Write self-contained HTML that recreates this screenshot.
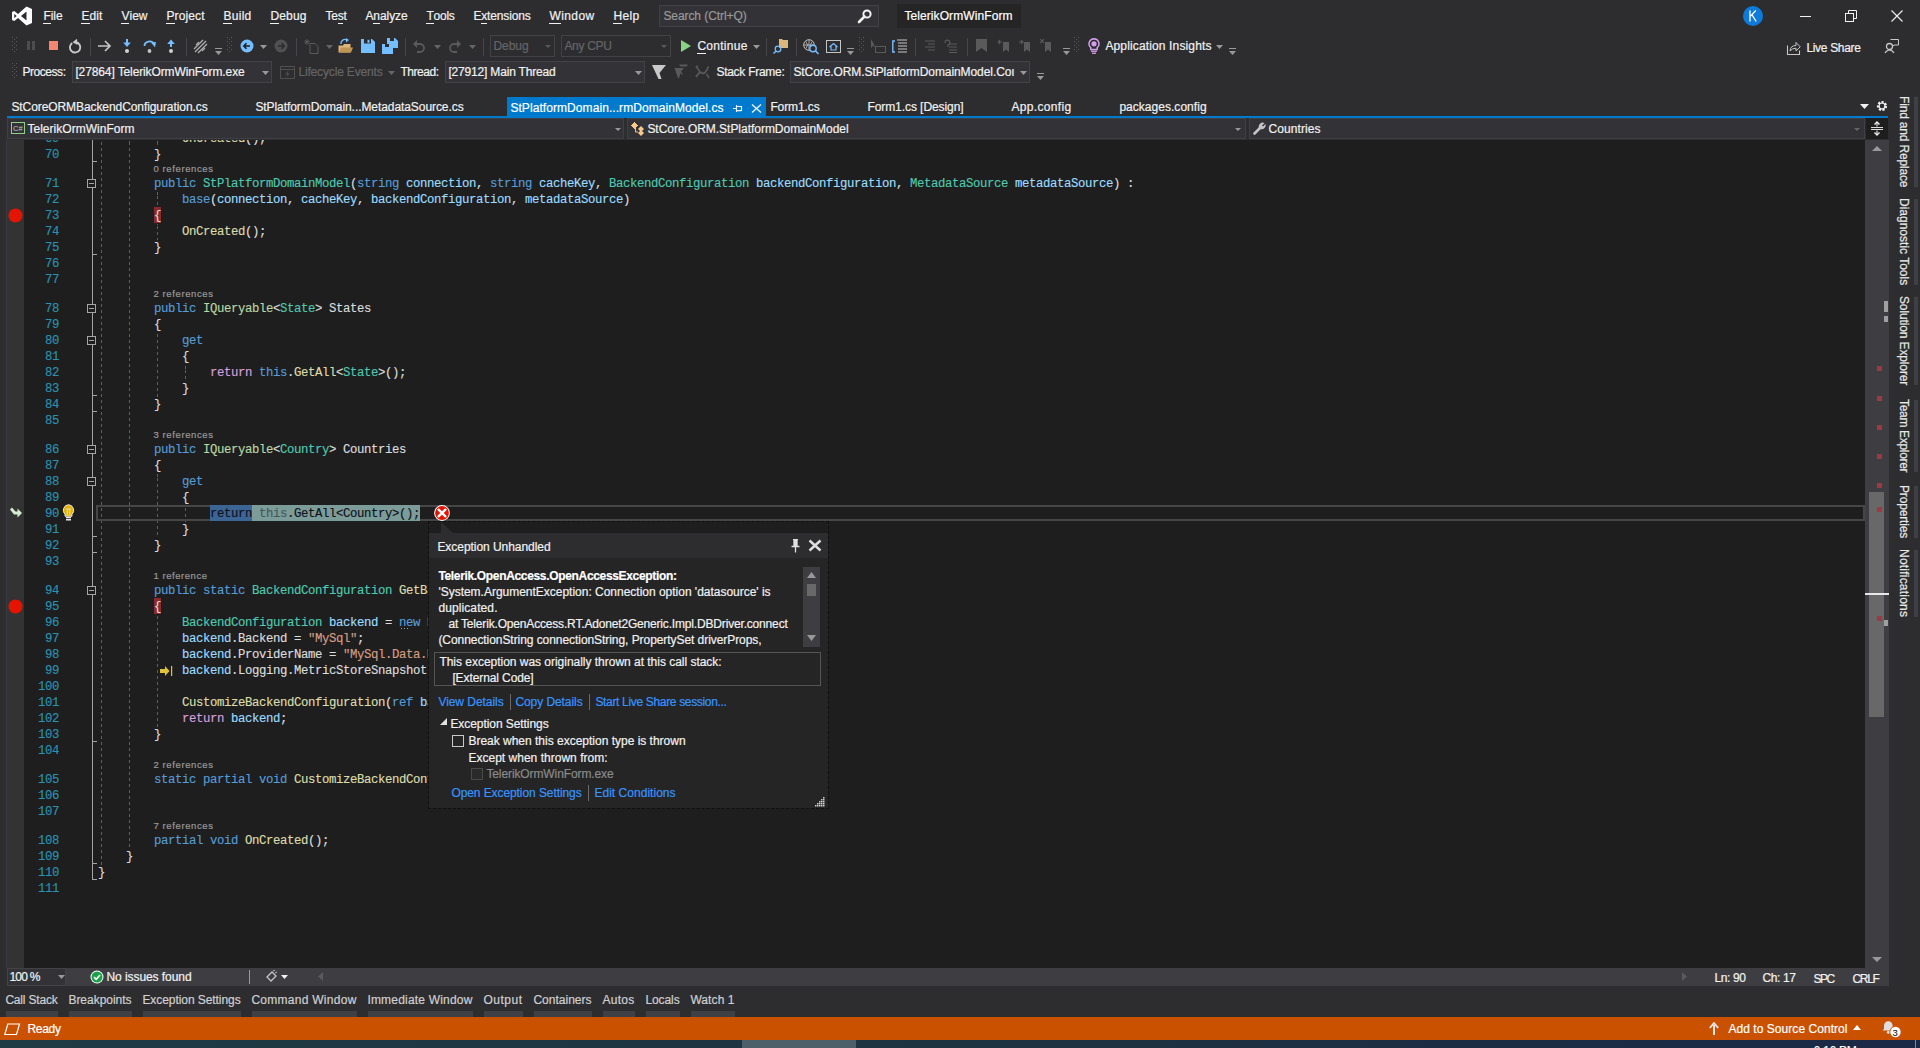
<!DOCTYPE html><html><head><meta charset="utf-8"><title>VS</title><style>
*{margin:0;padding:0;box-sizing:border-box}
html,body{width:1920px;height:1048px;overflow:hidden;background:#2d2d30}
body{position:relative;font-family:"Liberation Sans",sans-serif;font-size:12px;color:#f1f1f1}
.a{position:absolute}
.t{-webkit-text-stroke:0.2px currentColor;white-space:pre;line-height:16px;height:16px}
u{text-decoration:none;border-bottom:1px solid currentColor;display:inline-block;line-height:13px}
.code{-webkit-text-stroke:0.15px currentColor;position:absolute;left:98px;font-family:"Liberation Mono",monospace;font-size:12.3px;letter-spacing:-0.38px;line-height:16px;height:16px;white-space:pre;color:#dcdcdc}
.k{color:#569cd6}.c{color:#d8a0df}.y{color:#4ec9b0}.i{color:#b8d7a3}.p{color:#9cdcfe}.m{color:#dcdcaa}.s{color:#d69d85}
.ln{-webkit-text-stroke:0.15px currentColor;position:absolute;width:59px;left:0;text-align:right;font-family:"Liberation Mono",monospace;font-size:12.3px;letter-spacing:-0.38px;line-height:16px;height:16px;color:#2b91af}
.cl{-webkit-text-stroke:0.15px currentColor;position:absolute;left:153px;font-size:9.5px;line-height:13px;height:13px;color:#999999;white-space:pre}
</style></head><body><svg class="a" style="left:12px;top:6px;" width="20" height="20" viewBox="0 0 20 20"><path d="M14.5 0.5L20 3V17L14.5 19.5L6 12L2.3 15L0 13.9V6.1L2.3 5L6 8ZM14.5 5.5L9 10L14.5 14.5ZM2.3 7.7V12.3L4.6 10Z" fill="#ffffff" fill-rule="evenodd"/></svg>
<div class="a t" style="letter-spacing:-0.040px;left:43.40px;top:7.84px;font-size:12px;color:#f1f1f1;"><u>F</u>ile</div>
<div class="a t" style="letter-spacing:0.124px;left:81.40px;top:7.84px;font-size:12px;color:#f1f1f1;"><u>E</u>dit</div>
<div class="a t" style="letter-spacing:0.042px;left:121.40px;top:7.84px;font-size:12px;color:#f1f1f1;"><u>V</u>iew</div>
<div class="a t" style="letter-spacing:0.120px;left:166.40px;top:7.84px;font-size:12px;color:#f1f1f1;"><u>P</u>roject</div>
<div class="a t" style="letter-spacing:0.299px;left:223.40px;top:7.84px;font-size:12px;color:#f1f1f1;"><u>B</u>uild</div>
<div class="a t" style="letter-spacing:0.165px;left:270.40px;top:7.84px;font-size:12px;color:#f1f1f1;"><u>D</u>ebug</div>
<div class="a t" style="letter-spacing:-0.208px;left:325.40px;top:7.84px;font-size:12px;color:#f1f1f1;">Te<u>s</u>t</div>
<div class="a t" style="letter-spacing:-0.074px;left:365.40px;top:7.84px;font-size:12px;color:#f1f1f1;">A<u>n</u>alyze</div>
<div class="a t" style="letter-spacing:-0.232px;left:426.40px;top:7.84px;font-size:12px;color:#f1f1f1;"><u>T</u>ools</div>
<div class="a t" style="letter-spacing:-0.152px;left:473.40px;top:7.84px;font-size:12px;color:#f1f1f1;">E<u>x</u>tensions</div>
<div class="a t" style="letter-spacing:0.419px;left:549.40px;top:7.84px;font-size:12px;color:#f1f1f1;"><u>W</u>indow</div>
<div class="a t" style="letter-spacing:0.378px;left:613.40px;top:7.84px;font-size:12px;color:#f1f1f1;"><u>H</u>elp</div>
<div class="a" style="left:659px;top:5px;width:220px;height:22px;background:#333337;box-shadow:inset 0 0 0 1px #434346;"></div>
<div class="a t" style="letter-spacing:-0.077px;left:663.40px;top:7.84px;font-size:12px;color:#999999;">Search (Ctrl+Q)</div>
<svg class="a" style="left:857px;top:9px;" width="15" height="15" viewBox="0 0 15 15"><circle cx="10" cy="5" r="3.6" fill="none" stroke="#f1f1f1" stroke-width="2"/><path d="M7.5 7.5L2 13" stroke="#f1f1f1" stroke-width="2.6" stroke-linecap="round"/></svg>
<div class="a" style="left:897px;top:4px;width:124px;height:24px;background:#252526;"></div>
<div class="a t" style="letter-spacing:0.090px;left:904.40px;top:7.84px;font-size:12px;color:#ffffff;">TelerikOrmWinForm</div>
<svg class="a" style="left:1743px;top:6px;" width="20" height="20" viewBox="0 0 20 20"><circle cx="10" cy="10" r="10" fill="#0e7ad9"/><path d="M7 4.5V15.5M7 10.6L12.8 4.5M9 8.8L13.2 15.5" stroke="#fff" stroke-width="1.3" fill="none"/></svg>
<div class="a" style="left:1800px;top:16px;width:11px;height:1px;background:#f1f1f1;"></div>
<svg class="a" style="left:1845px;top:10px;" width="12" height="12" viewBox="0 0 12 12"><rect x="0.5" y="3.5" width="8" height="8" fill="none" stroke="#f1f1f1"/><path d="M3.5 3.5V0.5H11.5V8.5H8.5" fill="none" stroke="#f1f1f1"/></svg>
<svg class="a" style="left:1891px;top:10px;" width="12" height="12" viewBox="0 0 12 12"><path d="M0.5 0.5L11.5 11.5M11.5 0.5L0.5 11.5" stroke="#f1f1f1" stroke-width="1.1"/></svg>
<svg class="a" style="left:12px;top:37px;" width="5" height="16" viewBox="0 0 5 16"><rect x="0" y="0" width="1" height="1" fill="#5a5a5a"/><rect x="2" y="2" width="1" height="1" fill="#5a5a5a"/><rect x="4" y="0" width="1" height="1" fill="#5a5a5a"/><rect x="0" y="4" width="1" height="1" fill="#5a5a5a"/><rect x="2" y="6" width="1" height="1" fill="#5a5a5a"/><rect x="4" y="4" width="1" height="1" fill="#5a5a5a"/><rect x="0" y="8" width="1" height="1" fill="#5a5a5a"/><rect x="2" y="10" width="1" height="1" fill="#5a5a5a"/><rect x="4" y="8" width="1" height="1" fill="#5a5a5a"/><rect x="0" y="12" width="1" height="1" fill="#5a5a5a"/><rect x="2" y="14" width="1" height="1" fill="#5a5a5a"/><rect x="4" y="12" width="1" height="1" fill="#5a5a5a"/></svg>
<svg class="a" style="left:27px;top:41px;" width="9" height="9" viewBox="0 0 9 9"><rect x="0" y="0" width="3" height="9" fill="#4d4d4d"/><rect x="5" y="0" width="3" height="9" fill="#4d4d4d"/></svg>
<div class="a" style="left:49px;top:41px;width:9px;height:9px;background:#f48771;"></div>
<svg class="a" style="left:68px;top:38px;" width="14" height="16" viewBox="0 0 14 16"><path d="M4.2 5A5.2 5.2 0 1 0 8 4.2" fill="none" stroke="#c8c8c8" stroke-width="1.9"/><path d="M9 0.8L4.5 4.2L9.5 7Z" fill="#c8c8c8"/></svg>
<div class="a" style="left:90px;top:38px;width:1px;height:18px;background:#46464a;"></div>
<svg class="a" style="left:97px;top:39px;" width="15" height="14" viewBox="0 0 15 14"><path d="M1 7H13M8 2L13 7L8 12" fill="none" stroke="#c5c5c5" stroke-width="1.7"/></svg>
<svg class="a" style="left:122px;top:39px;" width="10" height="15" viewBox="0 0 10 15"><path d="M5 0V5" stroke="#75beff" stroke-width="2"/><path d="M1.2 3.5L5 8L8.8 3.5Z" fill="#75beff"/><circle cx="5" cy="12" r="2" fill="#d0d0d0"/></svg>
<svg class="a" style="left:143px;top:39px;" width="14" height="15" viewBox="0 0 14 15"><path d="M1.5 7A5 4.5 0 0 1 11 5" fill="none" stroke="#75beff" stroke-width="1.8"/><path d="M8 3.5L13 3L12 8.5Z" fill="#75beff"/><circle cx="6.5" cy="12" r="1.9" fill="#c5c5c5"/></svg>
<svg class="a" style="left:166px;top:39px;" width="10" height="15" viewBox="0 0 10 15"><path d="M5 3V8" stroke="#75beff" stroke-width="2"/><path d="M1.2 5L5 0.5L8.8 5Z" fill="#75beff"/><circle cx="5" cy="12" r="2" fill="#d0d0d0"/></svg>
<div class="a" style="left:186px;top:38px;width:1px;height:18px;background:#46464a;"></div>
<svg class="a" style="left:193px;top:39px;" width="15" height="15" viewBox="0 0 15 15"><path d="M2 13L13 2M5 14L14 5M1 10L10 1" stroke="#b0b0b0" stroke-width="1.3" fill="none"/><path d="M3 6L6 3M9 12L12 9" stroke="#b0b0b0" stroke-width="1.2"/></svg>
<svg class="a" style="left:215px;top:48px;" width="8" height="8" viewBox="0 0 8 8"><rect x="0" y="0" width="7" height="1" fill="#999"/><path d="M0 3H7L3.5 7Z" fill="#999"/></svg>
<svg class="a" style="left:227px;top:37px;" width="5" height="16" viewBox="0 0 5 16"><rect x="0" y="0" width="1" height="1" fill="#5a5a5a"/><rect x="2" y="2" width="1" height="1" fill="#5a5a5a"/><rect x="4" y="0" width="1" height="1" fill="#5a5a5a"/><rect x="0" y="4" width="1" height="1" fill="#5a5a5a"/><rect x="2" y="6" width="1" height="1" fill="#5a5a5a"/><rect x="4" y="4" width="1" height="1" fill="#5a5a5a"/><rect x="0" y="8" width="1" height="1" fill="#5a5a5a"/><rect x="2" y="10" width="1" height="1" fill="#5a5a5a"/><rect x="4" y="8" width="1" height="1" fill="#5a5a5a"/><rect x="0" y="12" width="1" height="1" fill="#5a5a5a"/><rect x="2" y="14" width="1" height="1" fill="#5a5a5a"/><rect x="4" y="12" width="1" height="1" fill="#5a5a5a"/></svg>
<svg class="a" style="left:240px;top:39px;" width="14" height="14" viewBox="0 0 14 14"><circle cx="7" cy="7" r="6.5" fill="#75beff"/><path d="M10 7H4M6.5 4.2L3.8 7L6.5 9.8" stroke="#1e1e1e" stroke-width="1.6" fill="none"/></svg>
<svg class="a" style="left:260px;top:45px;" width="7" height="4" viewBox="0 0 7 4"><path d="M0 0H7L3.5 4Z" fill="#999999"/></svg>
<svg class="a" style="left:274px;top:39px;" width="14" height="14" viewBox="0 0 14 14"><circle cx="7" cy="7" r="6.5" fill="#505050"/><path d="M4 7H10M7.5 4.2L10.2 7L7.5 9.8" stroke="#2d2d30" stroke-width="1.6" fill="none"/></svg>
<div class="a" style="left:296px;top:38px;width:1px;height:18px;background:#46464a;"></div>
<svg class="a" style="left:304px;top:39px;" width="15" height="15" viewBox="0 0 15 15"><path d="M6 4.5H11L14 7.5V14.5H6Z" fill="none" stroke="#5a5a5a" stroke-width="1"/><path d="M3 0V6M0 3H6M1 1L5 5M5 1L1 5" stroke="#5a5a5a" stroke-width="0.9"/></svg>
<svg class="a" style="left:326px;top:45px;" width="7" height="4" viewBox="0 0 7 4"><path d="M0 0H7L3.5 4Z" fill="#656565"/></svg>
<svg class="a" style="left:338px;top:38px;" width="15" height="16" viewBox="0 0 15 16"><path d="M0.5 7.5H5L6 6H12.5V14.5H0.5Z" fill="#dcb67a"/><path d="M1 14.5L3 9.5H15L13 14.5Z" fill="#c09553"/><path d="M3 6A4 4 0 0 1 9 2" fill="none" stroke="#75beff" stroke-width="1.4"/><path d="M8 0L11 2L8 4.5Z" fill="#75beff"/></svg>
<svg class="a" style="left:361px;top:39px;" width="14" height="14" viewBox="0 0 14 14"><path d="M0 0H11L14 3V14H0Z" fill="#75beff"/><rect x="3" y="0" width="7" height="4.5" fill="#2d2d30"/><rect x="6.5" y="0.8" width="2" height="3" fill="#75beff"/></svg>
<svg class="a" style="left:382px;top:38px;" width="16" height="16" viewBox="0 0 16 16"><path d="M5 0H13L16 3V10H5Z" fill="#75beff"/><rect x="8" y="0" width="4" height="3" fill="#2d2d30"/><path d="M0 6H8L11 9V16H0Z" fill="#75beff"/><rect x="3" y="6" width="4" height="3" fill="#2d2d30"/></svg>
<div class="a" style="left:405px;top:38px;width:1px;height:18px;background:#46464a;"></div>
<svg class="a" style="left:413px;top:39px;" width="12" height="14" viewBox="0 0 12 14"><path d="M2 5H7A4 4 0 0 1 7 13H4" fill="none" stroke="#5a5a5a" stroke-width="1.8"/><path d="M0 5L4 1V9Z" fill="#5a5a5a"/></svg>
<svg class="a" style="left:434px;top:45px;" width="7" height="4" viewBox="0 0 7 4"><path d="M0 0H7L3.5 4Z" fill="#656565"/></svg>
<svg class="a" style="left:449px;top:39px;" width="12" height="14" viewBox="0 0 12 14"><path d="M10 5H5A4 4 0 0 0 5 13H8" fill="none" stroke="#5a5a5a" stroke-width="1.8"/><path d="M12 5L8 1V9Z" fill="#5a5a5a"/></svg>
<svg class="a" style="left:469px;top:45px;" width="7" height="4" viewBox="0 0 7 4"><path d="M0 0H7L3.5 4Z" fill="#656565"/></svg>
<div class="a" style="left:483px;top:38px;width:1px;height:18px;background:#46464a;"></div>
<div class="a" style="left:490px;top:35px;width:65px;height:22px;box-shadow:inset 0 0 0 1px #434346;"></div>
<svg class="a" style="left:545px;top:45px;" width="6" height="3" viewBox="0 0 6 3"><path d="M0 0H6L3.0 3Z" fill="#5a5a5a"/></svg>
<div class="a t" style="letter-spacing:-0.035px;left:493.40px;top:37.84px;font-size:12px;color:#656565;">Debug</div>
<div class="a" style="left:561px;top:35px;width:110px;height:22px;box-shadow:inset 0 0 0 1px #434346;"></div>
<svg class="a" style="left:661px;top:45px;" width="6" height="3" viewBox="0 0 6 3"><path d="M0 0H6L3.0 3Z" fill="#5a5a5a"/></svg>
<div class="a t" style="letter-spacing:-0.308px;left:564.40px;top:37.84px;font-size:12px;color:#656565;">Any CPU</div>
<svg class="a" style="left:681px;top:40px;" width="10" height="12" viewBox="0 0 10 12"><path d="M0 0L10 6L0 12Z" fill="#89d185"/></svg>
<div class="a t" style="letter-spacing:0.269px;left:697.40px;top:37.84px;font-size:12px;color:#f1f1f1;"><u>C</u>ontinue</div>
<svg class="a" style="left:753px;top:45px;" width="7" height="4" viewBox="0 0 7 4"><path d="M0 0H7L3.5 4Z" fill="#999999"/></svg>
<div class="a" style="left:766px;top:38px;width:1px;height:18px;background:#46464a;"></div>
<svg class="a" style="left:773px;top:38px;" width="16" height="16" viewBox="0 0 16 16"><path d="M6 1H9L10 2H15V10H6Z" fill="#dcb67a"/><circle cx="5" cy="11" r="2.8" fill="none" stroke="#75beff" stroke-width="1.3"/><path d="M3 13L0.5 15.5" stroke="#75beff" stroke-width="1.5"/></svg>
<div class="a" style="left:796px;top:38px;width:1px;height:18px;background:#46464a;"></div>
<svg class="a" style="left:803px;top:39px;" width="17" height="16" viewBox="0 0 17 16"><circle cx="6" cy="6" r="5.3" fill="none" stroke="#c5c5c5" stroke-width="1"/><path d="M1 6H11M6 1V11M3 2.5Q6 6 3 9.5M9 2.5Q6 6 9 9.5" fill="none" stroke="#c5c5c5" stroke-width="0.8"/><circle cx="10" cy="9.5" r="3.2" fill="#2d2d30" stroke="#75beff" stroke-width="1.4"/><path d="M12.3 11.8L15.5 15" stroke="#75beff" stroke-width="1.6"/></svg>
<svg class="a" style="left:826px;top:40px;" width="15" height="13" viewBox="0 0 15 13"><rect x="0.5" y="0.5" width="14" height="12" fill="none" stroke="#c5c5c5"/><path d="M3.5 7L7.5 3.5L11.5 7M5 6V10H10V6" fill="none" stroke="#75beff" stroke-width="1.2"/></svg>
<svg class="a" style="left:847px;top:48px;" width="8" height="8" viewBox="0 0 8 8"><rect x="0" y="0" width="7" height="1" fill="#999"/><path d="M0 3H7L3.5 7Z" fill="#999"/></svg>
<svg class="a" style="left:859px;top:37px;" width="5" height="16" viewBox="0 0 5 16"><rect x="0" y="0" width="1" height="1" fill="#5a5a5a"/><rect x="2" y="2" width="1" height="1" fill="#5a5a5a"/><rect x="4" y="0" width="1" height="1" fill="#5a5a5a"/><rect x="0" y="4" width="1" height="1" fill="#5a5a5a"/><rect x="2" y="6" width="1" height="1" fill="#5a5a5a"/><rect x="4" y="4" width="1" height="1" fill="#5a5a5a"/><rect x="0" y="8" width="1" height="1" fill="#5a5a5a"/><rect x="2" y="10" width="1" height="1" fill="#5a5a5a"/><rect x="4" y="8" width="1" height="1" fill="#5a5a5a"/><rect x="0" y="12" width="1" height="1" fill="#5a5a5a"/><rect x="2" y="14" width="1" height="1" fill="#5a5a5a"/><rect x="4" y="12" width="1" height="1" fill="#5a5a5a"/></svg>
<svg class="a" style="left:871px;top:39px;" width="15" height="15" viewBox="0 0 15 15"><path d="M0 0V9L2.5 6.5L5 9" fill="#5a5a5a"/><rect x="4.5" y="7.5" width="10" height="6" fill="none" stroke="#5a5a5a"/></svg>
<svg class="a" style="left:892px;top:39px;" width="16" height="15" viewBox="0 0 16 15"><path d="M3 2H0.8V13H3" fill="none" stroke="#75beff" stroke-width="1.4"/><path d="M5 1H15M6 4H15M6 7H15M6 10H15M6 13H15" stroke="#c5c5c5" stroke-width="1.1"/></svg>
<div class="a" style="left:915px;top:38px;width:1px;height:18px;background:#46464a;"></div>
<svg class="a" style="left:923px;top:40px;" width="13" height="12" viewBox="0 0 13 12"><path d="M2 1H12M5 4H12M2 7H12M5 10H12" stroke="#5a5a5a" stroke-width="1"/></svg>
<svg class="a" style="left:944px;top:39px;" width="14" height="14" viewBox="0 0 14 14"><path d="M5 5H13M5 8H13M5 11H13M5 13.5H13" stroke="#5a5a5a" stroke-width="1"/><path d="M1 4A2.5 2.5 0 1 1 4 6V8" fill="none" stroke="#5a5a5a" stroke-width="1.2"/></svg>
<div class="a" style="left:967px;top:38px;width:1px;height:18px;background:#46464a;"></div>
<svg class="a" style="left:976px;top:39px;" width="12" height="14" viewBox="0 0 12 14"><path d="M0 0H11V13L5.5 9L0 13Z" fill="#5a5a5a"/></svg>
<svg class="a" style="left:998px;top:39px;" width="13" height="14" viewBox="0 0 13 14"><path d="M5 3H11V13L8 10.5L5 13Z" fill="#5a5a5a"/><path d="M4 3H0M2 1L0 3L2 5" stroke="#5a5a5a" stroke-width="1.2" fill="none"/></svg>
<svg class="a" style="left:1019px;top:39px;" width="13" height="14" viewBox="0 0 13 14"><path d="M5 3H11V13L8 10.5L5 13Z" fill="#5a5a5a"/><path d="M0 3H4M2 1L4 3L2 5" stroke="#5a5a5a" stroke-width="1.2" fill="none"/></svg>
<svg class="a" style="left:1040px;top:39px;" width="13" height="14" viewBox="0 0 13 14"><path d="M5 3H11V13L8 10.5L5 13Z" fill="#5a5a5a"/><path d="M0 0L4 4M4 0L0 4" stroke="#5a5a5a" stroke-width="1.1"/></svg>
<svg class="a" style="left:1063px;top:48px;" width="8" height="8" viewBox="0 0 8 8"><rect x="0" y="0" width="7" height="1" fill="#999"/><path d="M0 3H7L3.5 7Z" fill="#999"/></svg>
<svg class="a" style="left:1074px;top:37px;" width="5" height="16" viewBox="0 0 5 16"><rect x="0" y="0" width="1" height="1" fill="#5a5a5a"/><rect x="2" y="2" width="1" height="1" fill="#5a5a5a"/><rect x="4" y="0" width="1" height="1" fill="#5a5a5a"/><rect x="0" y="4" width="1" height="1" fill="#5a5a5a"/><rect x="2" y="6" width="1" height="1" fill="#5a5a5a"/><rect x="4" y="4" width="1" height="1" fill="#5a5a5a"/><rect x="0" y="8" width="1" height="1" fill="#5a5a5a"/><rect x="2" y="10" width="1" height="1" fill="#5a5a5a"/><rect x="4" y="8" width="1" height="1" fill="#5a5a5a"/><rect x="0" y="12" width="1" height="1" fill="#5a5a5a"/><rect x="2" y="14" width="1" height="1" fill="#5a5a5a"/><rect x="4" y="12" width="1" height="1" fill="#5a5a5a"/></svg>
<svg class="a" style="left:1088px;top:38px;" width="12" height="16" viewBox="0 0 12 16"><path d="M6 0.8A5 5 0 0 1 9.2 9.6V11.5H2.8V9.6A5 5 0 0 1 6 0.8Z" fill="none" stroke="#d39fe9" stroke-width="1.5"/><circle cx="6" cy="5.8" r="2.6" fill="#d39fe9"/><rect x="3" y="12.6" width="6" height="1.3" fill="#d39fe9"/><rect x="4" y="14.6" width="4" height="1.3" fill="#d39fe9"/></svg>
<div class="a t" style="letter-spacing:0.140px;left:1105.40px;top:37.84px;font-size:12px;color:#f1f1f1;">Application Insights</div>
<svg class="a" style="left:1216px;top:45px;" width="7" height="4" viewBox="0 0 7 4"><path d="M0 0H7L3.5 4Z" fill="#999999"/></svg>
<svg class="a" style="left:1229px;top:48px;" width="8" height="8" viewBox="0 0 8 8"><rect x="0" y="0" width="7" height="1" fill="#999"/><path d="M0 3H7L3.5 7Z" fill="#999"/></svg>
<svg class="a" style="left:1786px;top:40px;" width="15" height="16" viewBox="0 0 15 16"><path d="M1.5 5.5V14.5H13.5V10.5" fill="none" stroke="#c8c8c8" stroke-width="1.1"/><path d="M4 11Q4.5 5.5 10 5.5V2.5L14.2 6.8L10 11V8.2Q6 8.2 4 11Z" fill="none" stroke="#c8c8c8" stroke-width="1"/></svg>
<div class="a t" style="letter-spacing:-0.317px;left:1806.40px;top:39.84px;font-size:12px;color:#f1f1f1;">Live Share</div>
<svg class="a" style="left:1884px;top:38px;" width="16" height="17" viewBox="0 0 16 17"><circle cx="5.5" cy="8.5" r="3" fill="none" stroke="#c8c8c8" stroke-width="1.3"/><path d="M1 15Q3 11.8 5.5 11.8Q8 11.8 10 15" fill="none" stroke="#c8c8c8" stroke-width="1.3"/><path d="M6.5 1.5H14.5V7H10L8.5 8.5V7" fill="none" stroke="#c8c8c8" stroke-width="1"/></svg>
<svg class="a" style="left:12px;top:63px;" width="5" height="16" viewBox="0 0 5 16"><rect x="0" y="0" width="1" height="1" fill="#5a5a5a"/><rect x="2" y="2" width="1" height="1" fill="#5a5a5a"/><rect x="4" y="0" width="1" height="1" fill="#5a5a5a"/><rect x="0" y="4" width="1" height="1" fill="#5a5a5a"/><rect x="2" y="6" width="1" height="1" fill="#5a5a5a"/><rect x="4" y="4" width="1" height="1" fill="#5a5a5a"/><rect x="0" y="8" width="1" height="1" fill="#5a5a5a"/><rect x="2" y="10" width="1" height="1" fill="#5a5a5a"/><rect x="4" y="8" width="1" height="1" fill="#5a5a5a"/><rect x="0" y="12" width="1" height="1" fill="#5a5a5a"/><rect x="2" y="14" width="1" height="1" fill="#5a5a5a"/><rect x="4" y="12" width="1" height="1" fill="#5a5a5a"/></svg>
<div class="a t" style="letter-spacing:-0.436px;left:22.40px;top:63.84px;font-size:12px;color:#f1f1f1;">Process:</div>
<div class="a" style="left:72px;top:61px;width:200px;height:22px;background:#333337;box-shadow:inset 0 0 0 1px #434346;"></div>
<div class="a t" style="letter-spacing:-0.114px;left:75.40px;top:63.84px;font-size:12px;color:#f1f1f1;">[27864] TelerikOrmWinForm.exe</div>
<svg class="a" style="left:262px;top:71px;" width="7" height="4" viewBox="0 0 7 4"><path d="M0 0H7L3.5 4Z" fill="#999999"/></svg>
<svg class="a" style="left:280px;top:66px;" width="15" height="13" viewBox="0 0 15 13"><path d="M0.5 3.5V12.5H14.5V0.5H0.5V3.5H14.5" fill="none" stroke="#505050"/><path d="M8.5 4.5L5 8.5H7.5L6 11.5L10 7.5H7.5Z" fill="#505050"/></svg>
<div class="a t" style="letter-spacing:-0.157px;left:298.40px;top:63.84px;font-size:12px;color:#656565;">Lifecycle Events</div>
<svg class="a" style="left:388px;top:71px;" width="7" height="4" viewBox="0 0 7 4"><path d="M0 0H7L3.5 4Z" fill="#656565"/></svg>
<div class="a t" style="letter-spacing:-0.451px;left:400.40px;top:63.84px;font-size:12px;color:#f1f1f1;">Thread:</div>
<div class="a" style="left:445px;top:61px;width:200px;height:22px;background:#333337;box-shadow:inset 0 0 0 1px #434346;"></div>
<div class="a t" style="letter-spacing:-0.175px;left:448.40px;top:63.84px;font-size:12px;color:#f1f1f1;">[27912] Main Thread</div>
<svg class="a" style="left:635px;top:71px;" width="7" height="4" viewBox="0 0 7 4"><path d="M0 0H7L3.5 4Z" fill="#999999"/></svg>
<svg class="a" style="left:651px;top:64px;" width="16" height="16" viewBox="0 0 16 16"><path d="M1 1H15L8.5 9L10.5 15H7.5Z" fill="#c8c8c8"/></svg>
<svg class="a" style="left:674px;top:63px;" width="16" height="17" viewBox="0 0 16 17"><path d="M5 1.5H14L12.5 3.5H6.5Z" fill="#5a5a5a"/><path d="M0.5 5H10L7 8.5L9 11.5H7.5L6.5 10L5 15H4Z" fill="#5a5a5a"/></svg>
<svg class="a" style="left:695px;top:65px;" width="16" height="14" viewBox="0 0 16 14"><circle cx="1.8" cy="1.8" r="1.2" fill="#5a5a5a"/><path d="M1 12Q4.5 6 7 8Q10 10 13.5 1.5" fill="none" stroke="#5a5a5a" stroke-width="1.8"/><path d="M2 2.5L5 7M11.5 9L14 13" stroke="#5a5a5a" stroke-width="1.5"/></svg>
<div class="a t" style="letter-spacing:-0.263px;left:716.40px;top:63.84px;font-size:12px;color:#f1f1f1;">Stack Frame:</div>
<div class="a" style="left:790px;top:61px;width:240px;height:22px;background:#333337;box-shadow:inset 0 0 0 1px #434346;"></div>
<div class="a t" style="letter-spacing:-0.080px;left:793.40px;top:63.84px;font-size:12px;color:#f1f1f1;">StCore.ORM.StPlatformDomainModel.Coı</div>
<svg class="a" style="left:1020px;top:71px;" width="7" height="4" viewBox="0 0 7 4"><path d="M0 0H7L3.5 4Z" fill="#999999"/></svg>
<svg class="a" style="left:1037px;top:73px;" width="8" height="8" viewBox="0 0 8 8"><rect x="0" y="0" width="7" height="1" fill="#999"/><path d="M0 3H7L3.5 7Z" fill="#999"/></svg>
<div class="a t" style="letter-spacing:-0.080px;left:11.40px;top:98.84px;font-size:12px;color:#f1f1f1;">StCoreORMBackendConfiguration.cs</div>
<div class="a t" style="letter-spacing:-0.071px;left:255.40px;top:98.84px;font-size:12px;color:#f1f1f1;">StPlatformDomain...MetadataSource.cs</div>
<div class="a" style="left:507px;top:97px;width:259px;height:19px;background:#007acc;"></div>
<div class="a t" style="letter-spacing:0.070px;left:510.40px;top:99.84px;font-size:12px;color:#ffffff;">StPlatformDomain...rmDomainModel.cs</div>
<svg class="a" style="left:733px;top:104px;" width="10" height="9" viewBox="0 0 10 9"><path d="M0 4.5H3.5M3.5 1V8" fill="none" stroke="#eef" stroke-width="1.1"/><path d="M4 2.5H8.5V6.5H4" fill="none" stroke="#eef" stroke-width="1.2"/><rect x="4" y="6" width="4.5" height="1.3" fill="#eef"/></svg>
<svg class="a" style="left:751px;top:104px;" width="11" height="9" viewBox="0 0 11 9"><path d="M1 0.5L10 8.5M10 0.5L1 8.5" stroke="#eef" stroke-width="1.4"/></svg>
<div class="a t" style="letter-spacing:-0.102px;left:770.40px;top:98.84px;font-size:12px;color:#f1f1f1;">Form1.cs</div>
<div class="a t" style="letter-spacing:-0.068px;left:867.40px;top:98.84px;font-size:12px;color:#f1f1f1;">Form1.cs [Design]</div>
<div class="a t" style="letter-spacing:0.348px;left:1011.40px;top:98.84px;font-size:12px;color:#f1f1f1;">App.config</div>
<div class="a t" style="letter-spacing:0.031px;left:1119.40px;top:98.84px;font-size:12px;color:#f1f1f1;">packages.config</div>
<svg class="a" style="left:1860px;top:104px;" width="9" height="6" viewBox="0 0 9 6"><path d="M0 0H9L4.5 5Z" fill="#f1f1f1"/></svg>
<svg class="a" style="left:1876px;top:100px;" width="12" height="12" viewBox="0 0 12 12"><circle cx="6" cy="6" r="3.8" fill="none" stroke="#f1f1f1" stroke-width="2.6" stroke-dasharray="2 1.4"/><circle cx="6" cy="6" r="3" fill="none" stroke="#f1f1f1" stroke-width="1.2"/></svg>
<div class="a" style="left:7px;top:116px;width:1881px;height:2px;background:#007acc;"></div>
<div class="a" style="left:7px;top:118px;width:1881px;height:22px;background:#2d2d30;"></div>
<div class="a" style="left:7px;top:118px;width:617px;height:21px;background:#333337;box-shadow:inset 0 0 0 1px #3f3f46;"></div>
<div class="a" style="left:627px;top:118px;width:619px;height:21px;background:#333337;box-shadow:inset 0 0 0 1px #3f3f46;"></div>
<div class="a" style="left:1249px;top:118px;width:616px;height:21px;background:#333337;box-shadow:inset 0 0 0 1px #3f3f46;"></div>
<svg class="a" style="left:11px;top:122px;" width="14" height="12" viewBox="0 0 14 12"><rect x="0.5" y="0.5" width="13" height="11" fill="none" stroke="#89d185"/><text x="2" y="9" font-size="7.5" fill="#c5c5c5" font-family="Liberation Sans">C#</text></svg>
<div class="a t" style="letter-spacing:0.031px;left:27.40px;top:120.84px;font-size:12px;color:#f1f1f1;">TelerikOrmWinForm</div>
<svg class="a" style="left:615px;top:128px;" width="6" height="3" viewBox="0 0 6 3"><path d="M0 0H6L3.0 3Z" fill="#999999"/></svg>
<svg class="a" style="left:630px;top:121px;" width="16" height="15" viewBox="0 0 16 15"><path d="M4.5 0.5L8.5 4.5L4.5 8.5L0.5 4.5Z" fill="#f6c88e" stroke="#1e1e1e" stroke-width="0.8"/><path d="M11 5L14 8L11 11L8 8Z" fill="#f6c88e"/><path d="M11 9L14 12L11 15L8 12Z" fill="#f6c88e"/><path d="M5.5 6V11H8" fill="none" stroke="#f6c88e"/></svg>
<div class="a t" style="letter-spacing:-0.027px;left:647.40px;top:120.84px;font-size:12px;color:#f1f1f1;">StCore.ORM.StPlatformDomainModel</div>
<svg class="a" style="left:1235px;top:128px;" width="6" height="3" viewBox="0 0 6 3"><path d="M0 0H6L3.0 3Z" fill="#999999"/></svg>
<svg class="a" style="left:1253px;top:122px;" width="13" height="13" viewBox="0 0 13 13"><path d="M1.5 11.5L7 6" stroke="#c5c5c5" stroke-width="2.6" stroke-linecap="round"/><path d="M6 6A4 4 0 0 1 11.5 1L9 3.5L10 4.5L12.5 2A4 4 0 0 1 7.5 7Z" fill="#c5c5c5"/></svg>
<div class="a t" style="letter-spacing:0.093px;left:1268.40px;top:120.84px;font-size:12px;color:#f1f1f1;">Countries</div>
<svg class="a" style="left:1854px;top:128px;" width="6" height="3" viewBox="0 0 6 3"><path d="M0 0H6L3.0 3Z" fill="#656565"/></svg>
<div class="a" style="left:1866px;top:118px;width:22px;height:21px;background:#1e1e1e;"></div>
<svg class="a" style="left:1870px;top:121px;" width="14" height="15" viewBox="0 0 14 15"><path d="M1 6.5H13M1 8.5H13" stroke="#f1f1f1" stroke-width="0.9"/><path d="M7 1V5.5M7 9.5V14" stroke="#f1f1f1" stroke-width="1.1"/><path d="M4.5 3.5L7 1L9.5 3.5M4.5 11.5L7 14L9.5 11.5" fill="none" stroke="#f1f1f1" stroke-width="1.3"/></svg>
<div class="a" style="letter-spacing:-0.179px;left:1896px;top:96px;width:16px;writing-mode:vertical-rl;font-size:12px;line-height:16px;white-space:pre;color:#e8e8e8;-webkit-text-stroke:0.2px currentColor;">Find and Replace</div>
<div class="a" style="left:1914px;top:97px;width:4px;height:90px;background:#3f3f46;"></div>
<div class="a" style="letter-spacing:0.002px;left:1896px;top:198px;width:16px;writing-mode:vertical-rl;font-size:12px;line-height:16px;white-space:pre;color:#e8e8e8;-webkit-text-stroke:0.2px currentColor;">Diagnostic Tools</div>
<div class="a" style="left:1914px;top:199px;width:4px;height:86px;background:#3f3f46;"></div>
<div class="a" style="letter-spacing:-0.129px;left:1896px;top:296px;width:16px;writing-mode:vertical-rl;font-size:12px;line-height:16px;white-space:pre;color:#e8e8e8;-webkit-text-stroke:0.2px currentColor;">Solution Explorer</div>
<div class="a" style="left:1914px;top:297px;width:4px;height:88px;background:#3f3f46;"></div>
<div class="a" style="letter-spacing:-0.321px;left:1896px;top:399px;width:16px;writing-mode:vertical-rl;font-size:12px;line-height:16px;white-space:pre;color:#e8e8e8;-webkit-text-stroke:0.2px currentColor;">Team Explorer</div>
<div class="a" style="left:1914px;top:400px;width:4px;height:72px;background:#3f3f46;"></div>
<div class="a" style="letter-spacing:-0.150px;left:1896px;top:485px;width:16px;writing-mode:vertical-rl;font-size:12px;line-height:16px;white-space:pre;color:#e8e8e8;-webkit-text-stroke:0.2px currentColor;">Properties</div>
<div class="a" style="left:1914px;top:486px;width:4px;height:52px;background:#3f3f46;"></div>
<div class="a" style="letter-spacing:0.217px;left:1896px;top:549px;width:16px;writing-mode:vertical-rl;font-size:12px;line-height:16px;white-space:pre;color:#e8e8e8;-webkit-text-stroke:0.2px currentColor;">Notifications</div>
<div class="a" style="left:1914px;top:550px;width:4px;height:67px;background:#3f3f46;"></div>
<div class="a" style="left:7px;top:140px;width:1858px;height:828px;background:#1e1e1e;"></div>
<div class="a" style="left:7px;top:140px;width:17px;height:828px;background:#333333;"></div>
<div class="a" style="left:6px;top:140px;width:1px;height:828px;background:#3a3a42;"></div>
<div class="a" style="left:101px;top:140px;width:1px;height:725px;background:repeating-linear-gradient(to bottom,#5f5f5f 0,#5f5f5f 3px,transparent 3px,transparent 6px);background-position:0 2px;"></div>
<div class="a" style="left:129px;top:140px;width:1px;height:709px;background:repeating-linear-gradient(to bottom,#5f5f5f 0,#5f5f5f 3px,transparent 3px,transparent 6px);background-position:0 2px;"></div>
<div class="a" style="left:157px;top:140px;width:1px;height:7px;background:repeating-linear-gradient(to bottom,#5f5f5f 0,#5f5f5f 3px,transparent 3px,transparent 6px);background-position:0 2px;"></div>
<div class="a" style="left:157px;top:192px;width:1px;height:16px;background:repeating-linear-gradient(to bottom,#5f5f5f 0,#5f5f5f 3px,transparent 3px,transparent 6px);background-position:0 4px;"></div>
<div class="a" style="left:157px;top:224px;width:1px;height:16px;background:repeating-linear-gradient(to bottom,#5f5f5f 0,#5f5f5f 3px,transparent 3px,transparent 6px);background-position:0 2px;"></div>
<div class="a" style="left:157px;top:333px;width:1px;height:64px;background:repeating-linear-gradient(to bottom,#5f5f5f 0,#5f5f5f 3px,transparent 3px,transparent 6px);background-position:0 1px;"></div>
<div class="a" style="left:157px;top:474px;width:1px;height:64px;background:repeating-linear-gradient(to bottom,#5f5f5f 0,#5f5f5f 3px,transparent 3px,transparent 6px);background-position:0 4px;"></div>
<div class="a" style="left:157px;top:615px;width:1px;height:112px;background:repeating-linear-gradient(to bottom,#5f5f5f 0,#5f5f5f 3px,transparent 3px,transparent 6px);background-position:0 1px;"></div>
<div class="a" style="left:185px;top:365px;width:1px;height:16px;background:repeating-linear-gradient(to bottom,#5f5f5f 0,#5f5f5f 3px,transparent 3px,transparent 6px);background-position:0 5px;"></div>
<div class="a" style="left:185px;top:506px;width:1px;height:16px;background:repeating-linear-gradient(to bottom,#5f5f5f 0,#5f5f5f 3px,transparent 3px,transparent 6px);background-position:0 2px;"></div>
<div class="a" style="left:92px;top:140px;width:1px;height:739px;background:#a5a5a5;"></div>
<div class="a" style="left:92px;top:161px;width:5px;height:1px;background:#a5a5a5;"></div>
<div class="a" style="left:92px;top:254px;width:5px;height:1px;background:#a5a5a5;"></div>
<div class="a" style="left:92px;top:395px;width:5px;height:1px;background:#a5a5a5;"></div>
<div class="a" style="left:92px;top:411px;width:5px;height:1px;background:#a5a5a5;"></div>
<div class="a" style="left:92px;top:536px;width:5px;height:1px;background:#a5a5a5;"></div>
<div class="a" style="left:92px;top:552px;width:5px;height:1px;background:#a5a5a5;"></div>
<div class="a" style="left:92px;top:741px;width:5px;height:1px;background:#a5a5a5;"></div>
<div class="a" style="left:92px;top:863px;width:5px;height:1px;background:#a5a5a5;"></div>
<div class="a" style="left:92px;top:879px;width:5px;height:1px;background:#a5a5a5;"></div>
<div class="a" style="left:87px;top:179px;width:9px;height:9px;background:#1e1e1e;box-shadow:inset 0 0 0 1px #a5a5a5;"></div>
<div class="a" style="left:89px;top:183px;width:5px;height:1px;background:#a5a5a5;"></div>
<div class="a" style="left:87px;top:304px;width:9px;height:9px;background:#1e1e1e;box-shadow:inset 0 0 0 1px #a5a5a5;"></div>
<div class="a" style="left:89px;top:308px;width:5px;height:1px;background:#a5a5a5;"></div>
<div class="a" style="left:87px;top:336px;width:9px;height:9px;background:#1e1e1e;box-shadow:inset 0 0 0 1px #a5a5a5;"></div>
<div class="a" style="left:89px;top:340px;width:5px;height:1px;background:#a5a5a5;"></div>
<div class="a" style="left:87px;top:445px;width:9px;height:9px;background:#1e1e1e;box-shadow:inset 0 0 0 1px #a5a5a5;"></div>
<div class="a" style="left:89px;top:449px;width:5px;height:1px;background:#a5a5a5;"></div>
<div class="a" style="left:87px;top:477px;width:9px;height:9px;background:#1e1e1e;box-shadow:inset 0 0 0 1px #a5a5a5;"></div>
<div class="a" style="left:89px;top:481px;width:5px;height:1px;background:#a5a5a5;"></div>
<div class="a" style="left:87px;top:586px;width:9px;height:9px;background:#1e1e1e;box-shadow:inset 0 0 0 1px #a5a5a5;"></div>
<div class="a" style="left:89px;top:590px;width:5px;height:1px;background:#a5a5a5;"></div>
<div class="a" style="left:154px;top:207px;width:7px;height:16px;background:#8a2a2a;"></div>
<div class="a" style="left:154px;top:598px;width:7px;height:16px;background:#8a2a2a;"></div>
<div class="a" style="left:96px;top:505px;width:1769px;height:16px;box-shadow:inset 0 0 0 2px #464646;"></div>
<div class="a" style="left:210px;top:505px;width:42px;height:16px;background:#3a6594;"></div>
<div class="a" style="left:252px;top:505px;width:168px;height:16px;background:#7b9c98;"></div>
<div class="a" style="left:0;top:140px;width:1866px;height:828px;overflow:hidden"><div class="a" style="left:0;top:-140px;width:1866px;height:1048px">
<div class="ln" style="top:131px">69</div>
<div class="code" style="top:131px">            <span class="m">OnCreated</span>();</div>
<div class="ln" style="top:147px">70</div>
<div class="code" style="top:147px">        }</div>
<div class="ln" style="top:176px">71</div>
<div class="code" style="top:176px">        <span class="k">public</span> <span class="y">StPlatformDomainModel</span>(<span class="k">string</span> <span class="p">connection</span>, <span class="k">string</span> <span class="p">cacheKey</span>, <span class="y">BackendConfiguration</span> <span class="p">backendConfiguration</span>, <span class="y">MetadataSource</span> <span class="p">metadataSource</span>) :</div>
<div class="ln" style="top:192px">72</div>
<div class="code" style="top:192px">            <span class="k">base</span>(<span class="p">connection</span>, <span class="p">cacheKey</span>, <span class="p">backendConfiguration</span>, <span class="p">metadataSource</span>)</div>
<div class="ln" style="top:208px">73</div>
<div class="code" style="top:208px">        {</div>
<div class="ln" style="top:224px">74</div>
<div class="code" style="top:224px">            <span class="m">OnCreated</span>();</div>
<div class="ln" style="top:240px">75</div>
<div class="code" style="top:240px">        }</div>
<div class="ln" style="top:256px">76</div>
<div class="ln" style="top:272px">77</div>
<div class="ln" style="top:301px">78</div>
<div class="code" style="top:301px">        <span class="k">public</span> <span class="i">IQueryable</span>&lt;<span class="y">State</span>&gt; States</div>
<div class="ln" style="top:317px">79</div>
<div class="code" style="top:317px">        {</div>
<div class="ln" style="top:333px">80</div>
<div class="code" style="top:333px">            <span class="k">get</span></div>
<div class="ln" style="top:349px">81</div>
<div class="code" style="top:349px">            {</div>
<div class="ln" style="top:365px">82</div>
<div class="code" style="top:365px">                <span class="c">return</span> <span class="k">this</span>.<span class="m">GetAll</span>&lt;<span class="y">State</span>&gt;();</div>
<div class="ln" style="top:381px">83</div>
<div class="code" style="top:381px">            }</div>
<div class="ln" style="top:397px">84</div>
<div class="code" style="top:397px">        }</div>
<div class="ln" style="top:413px">85</div>
<div class="ln" style="top:442px">86</div>
<div class="code" style="top:442px">        <span class="k">public</span> <span class="i">IQueryable</span>&lt;<span class="y">Country</span>&gt; Countries</div>
<div class="ln" style="top:458px">87</div>
<div class="code" style="top:458px">        {</div>
<div class="ln" style="top:474px">88</div>
<div class="code" style="top:474px">            <span class="k">get</span></div>
<div class="ln" style="top:490px">89</div>
<div class="code" style="top:490px">            {</div>
<div class="ln" style="top:506px">90</div>
<div class="code" style="top:506px;color:#101018">                return <span style="color:#46585a">this</span>.GetAll&lt;Country&gt;();</div>
<div class="ln" style="top:522px">91</div>
<div class="code" style="top:522px">            }</div>
<div class="ln" style="top:538px">92</div>
<div class="code" style="top:538px">        }</div>
<div class="ln" style="top:554px">93</div>
<div class="ln" style="top:583px">94</div>
<div class="code" style="top:583px">        <span class="k">public</span> <span class="k">static</span> <span class="y">BackendConfiguration</span> <span class="m">GetBackendConfiguration</span>()</div>
<div class="ln" style="top:599px">95</div>
<div class="code" style="top:599px">        {</div>
<div class="ln" style="top:615px">96</div>
<div class="code" style="top:615px">            <span class="y">BackendConfiguration</span> <span class="p">backend</span> = <span class="k">new</span> <span class="y">BackendConfiguration</span>();</div>
<div class="ln" style="top:631px">97</div>
<div class="code" style="top:631px">            <span class="p">backend</span>.Backend = <span class="s">"MySql"</span>;</div>
<div class="ln" style="top:647px">98</div>
<div class="code" style="top:647px">            <span class="p">backend</span>.ProviderName = <span class="s">"MySql.Data.MySqlClient"</span>;</div>
<div class="ln" style="top:663px">99</div>
<div class="code" style="top:663px">            <span class="p">backend</span>.Logging.MetricStoreSnapshotInterval = 0;</div>
<div class="ln" style="top:679px">100</div>
<div class="ln" style="top:695px">101</div>
<div class="code" style="top:695px">            <span class="m">CustomizeBackendConfiguration</span>(<span class="k">ref</span> <span class="p">backend</span>);</div>
<div class="ln" style="top:711px">102</div>
<div class="code" style="top:711px">            <span class="c">return</span> <span class="p">backend</span>;</div>
<div class="ln" style="top:727px">103</div>
<div class="code" style="top:727px">        }</div>
<div class="ln" style="top:743px">104</div>
<div class="ln" style="top:772px">105</div>
<div class="code" style="top:772px">        <span class="k">static</span> <span class="k">partial</span> <span class="k">void</span> <span class="m">CustomizeBackendConfiguration</span>(<span class="k">ref</span> <span class="y">BackendConfiguration</span> <span class="p">config</span>);</div>
<div class="ln" style="top:788px">106</div>
<div class="ln" style="top:804px">107</div>
<div class="ln" style="top:833px">108</div>
<div class="code" style="top:833px">        <span class="k">partial</span> <span class="k">void</span> <span class="m">OnCreated</span>();</div>
<div class="ln" style="top:849px">109</div>
<div class="code" style="top:849px">    }</div>
<div class="ln" style="top:865px">110</div>
<div class="code" style="top:865px">}</div>
<div class="ln" style="top:881px">111</div>
</div></div>
<div class="a t" style="letter-spacing:0.616px;left:153.40px;top:160.71px;font-size:9.5px;color:#999999;">0 references</div>
<div class="a t" style="letter-spacing:0.616px;left:153.40px;top:285.71px;font-size:9.5px;color:#999999;">2 references</div>
<div class="a t" style="letter-spacing:0.616px;left:153.40px;top:426.71px;font-size:9.5px;color:#999999;">3 references</div>
<div class="a t" style="letter-spacing:0.558px;left:153.40px;top:567.71px;font-size:9.5px;color:#999999;">1 reference</div>
<div class="a t" style="letter-spacing:0.616px;left:153.40px;top:756.71px;font-size:9.5px;color:#999999;">2 references</div>
<div class="a t" style="letter-spacing:0.616px;left:153.40px;top:817.71px;font-size:9.5px;color:#999999;">7 references</div>
<svg class="a" style="left:8px;top:208px;" width="15" height="15" viewBox="0 0 15 15"><circle cx="7.5" cy="7.5" r="7" fill="#e51400"/></svg>
<svg class="a" style="left:8px;top:599px;" width="15" height="15" viewBox="0 0 15 15"><circle cx="7.5" cy="7.5" r="7" fill="#e51400"/></svg>
<svg class="a" style="left:9px;top:506px;" width="14" height="13" viewBox="0 0 14 13"><path d="M1 3.5L3 1.5L6.5 5.5H8.5V2.5L13 7L8.5 11.5V8.5H5L1 3.5Z" fill="#d6ecd2"/></svg>
<svg class="a" style="left:62px;top:504px;" width="13" height="17" viewBox="0 0 13 17"><path d="M6.5 0.7A5.6 5.6 0 0 1 10 10.3V12.2H3V10.3A5.6 5.6 0 0 1 6.5 0.7Z" fill="#e6b400" stroke="#f0f0f0" stroke-width="0.9"/><path d="M4.3 5H8.7M5.3 5V11M7.7 5V11" fill="none" stroke="#d8d8e8" stroke-width="1.1"/><rect x="4" y="12.8" width="5" height="1.5" fill="#e8e8e8"/><rect x="4" y="15" width="5" height="1.5" fill="#e8e8e8"/></svg>
<svg class="a" style="left:434px;top:505px;" width="16" height="16" viewBox="0 0 16 16"><circle cx="8" cy="8" r="7.9" fill="#ffffff"/><circle cx="8" cy="8" r="6.9" fill="#e51400"/><path d="M4.6 4.6L11.4 11.4M11.4 4.6L4.6 11.4" stroke="#fff" stroke-width="2.3" stroke-linecap="round"/></svg>
<svg class="a" style="left:160px;top:665px;" width="13" height="12" viewBox="0 0 13 12"><path d="M0 4H5V1L9.5 6L5 11V8H0Z" fill="#e1c03b"/><rect x="11" y="1" width="1.2" height="10" fill="#e1c03b"/></svg>
<div class="a" style="left:401px;top:628px;width:1px;height:1px;background:#9a9a9a;"></div>
<div class="a" style="left:404px;top:628px;width:1px;height:1px;background:#9a9a9a;"></div>
<div class="a" style="left:407px;top:628px;width:1px;height:1px;background:#9a9a9a;"></div>
<div class="a" style="left:1865px;top:140px;width:24px;height:828px;background:#3e3e42;"></div>
<svg class="a" style="left:1872px;top:146px;" width="10" height="5" viewBox="0 0 10 5"><path d="M0 5H10L5 0Z" fill="#999999"/></svg>
<svg class="a" style="left:1872px;top:957px;" width="10" height="5" viewBox="0 0 10 5"><path d="M0 0H10L5 5Z" fill="#999999"/></svg>
<div class="a" style="left:1869px;top:492px;width:15px;height:225px;background:#686868;"></div>
<div class="a" style="left:1877px;top:366px;width:5px;height:5px;background:#9b3a44;"></div>
<div class="a" style="left:1877px;top:396px;width:5px;height:5px;background:#9b3a44;"></div>
<div class="a" style="left:1877px;top:425px;width:5px;height:5px;background:#9b3a44;"></div>
<div class="a" style="left:1877px;top:454px;width:5px;height:5px;background:#9b3a44;"></div>
<div class="a" style="left:1877px;top:483px;width:5px;height:5px;background:#9b3a44;"></div>
<div class="a" style="left:1877px;top:507px;width:5px;height:5px;background:#9b3a44;"></div>
<div class="a" style="left:1877px;top:616px;width:5px;height:5px;background:#9b3a44;"></div>
<div class="a" style="left:1865px;top:593px;width:24px;height:2px;background:#e8e8e8;"></div>
<div class="a" style="left:1884px;top:301px;width:4px;height:11px;background:#a0a0a0;"></div>
<div class="a" style="left:1884px;top:316px;width:4px;height:6px;background:#a0a0a0;"></div>
<div class="a" style="left:1884px;top:620px;width:4px;height:6px;background:#a0a0a0;"></div>
<div class="a" style="left:428px;top:521px;width:401px;height:288px;background:#1e1e1e;border:1px dashed #101010;"></div>
<div class="a" style="left:429px;top:533px;width:399px;height:275px;background:#252526;"></div>
<svg class="a" style="left:441px;top:522px;" width="14" height="12" viewBox="0 0 14 12"><path d="M0 0L12 11H0Z" fill="#2d2d30"/></svg>
<div class="a" style="left:429px;top:533px;width:399px;height:25px;background:#2d2d30;"></div>
<div class="a t" style="letter-spacing:-0.047px;left:437.40px;top:538.84px;font-size:12px;color:#f1f1f1;">Exception Unhandled</div>
<svg class="a" style="left:791px;top:539px;" width="9" height="14" viewBox="0 0 9 14"><path d="M2 0.5H7M3 1V7M6 1V7M0.5 7.5H8.5M4.5 8V13.5" fill="none" stroke="#e0e0e0" stroke-width="1.3"/><rect x="3" y="1" width="3" height="6" fill="#e0e0e0"/></svg>
<svg class="a" style="left:808px;top:539px;" width="14" height="13" viewBox="0 0 14 13"><path d="M1.5 1.5L12.5 11.5M12.5 1.5L1.5 11.5" stroke="#e0e0e0" stroke-width="2.4"/></svg>
<div class="a t" style="letter-spacing:-0.334px;left:438.40px;top:567.84px;font-size:12px;color:#ffffff;font-weight:bold;">Telerik.OpenAccess.OpenAccessException:</div>
<div class="a t" style="letter-spacing:-0.014px;left:438.40px;top:583.84px;font-size:12px;color:#f1f1f1;">'System.ArgumentException: Connection option 'datasource' is</div>
<div class="a t" style="letter-spacing:0.105px;left:438.40px;top:599.84px;font-size:12px;color:#f1f1f1;">duplicated.</div>
<div class="a t" style="letter-spacing:-0.172px;left:448.40px;top:615.84px;font-size:12px;color:#f1f1f1;">at Telerik.OpenAccess.RT.Adonet2Generic.Impl.DBDriver.connect</div>
<div class="a t" style="letter-spacing:-0.061px;left:438.40px;top:631.84px;font-size:12px;color:#f1f1f1;">(ConnectionString connectionString, PropertySet driverProps,</div>
<div class="a" style="left:803px;top:567px;width:17px;height:80px;background:#3e3e42;"></div>
<svg class="a" style="left:807px;top:572px;" width="9" height="6" viewBox="0 0 9 6"><path d="M0 6H9L4.5 0Z" fill="#999999"/></svg>
<div class="a" style="left:807px;top:584px;width:9px;height:12px;background:#686868;"></div>
<svg class="a" style="left:807px;top:635px;" width="9" height="6" viewBox="0 0 9 6"><path d="M0 0H9L4.5 6Z" fill="#999999"/></svg>
<div class="a" style="left:434px;top:652px;width:387px;height:34px;box-shadow:inset 0 0 0 1px #555555;"></div>
<div class="a t" style="letter-spacing:-0.022px;left:439.40px;top:653.84px;font-size:12px;color:#f1f1f1;">This exception was originally thrown at this call stack:</div>
<div class="a t" style="letter-spacing:-0.101px;left:452.40px;top:669.84px;font-size:12px;color:#f1f1f1;">[External Code]</div>
<div class="a t" style="letter-spacing:-0.051px;left:438.40px;top:693.84px;font-size:12px;color:#3794ff;">View Details</div>
<div class="a" style="left:510px;top:694px;width:1px;height:16px;background:#6a6a6a;"></div>
<div class="a t" style="letter-spacing:-0.069px;left:515.40px;top:693.84px;font-size:12px;color:#3794ff;">Copy Details</div>
<div class="a" style="left:589px;top:694px;width:1px;height:16px;background:#6a6a6a;"></div>
<div class="a t" style="letter-spacing:-0.329px;left:595.40px;top:693.84px;font-size:12px;color:#3794ff;">Start Live Share session...</div>
<svg class="a" style="left:440px;top:718px;" width="7" height="7" viewBox="0 0 7 7"><path d="M7 0V7H0Z" fill="#e0e0e0"/></svg>
<div class="a t" style="letter-spacing:-0.067px;left:450.40px;top:715.84px;font-size:12px;color:#f1f1f1;">Exception Settings</div>
<div class="a" style="left:452px;top:735px;width:12px;height:12px;background:#252526;box-shadow:inset 0 0 0 1px #c8c8c8;"></div>
<div class="a t" style="letter-spacing:-0.006px;left:468.40px;top:732.84px;font-size:12px;color:#f1f1f1;">Break when this exception type is thrown</div>
<div class="a t" style="letter-spacing:0.019px;left:468.40px;top:749.84px;font-size:12px;color:#f1f1f1;">Except when thrown from:</div>
<div class="a" style="left:471px;top:768px;width:12px;height:12px;background:#2a2a2a;box-shadow:inset 0 0 0 1px #4a4a4a;"></div>
<div class="a t" style="letter-spacing:-0.103px;left:486.40px;top:765.84px;font-size:12px;color:#8a8a8a;">TelerikOrmWinForm.exe</div>
<div class="a t" style="letter-spacing:-0.082px;left:451.40px;top:784.84px;font-size:12px;color:#3794ff;">Open Exception Settings</div>
<div class="a" style="left:588px;top:785px;width:1px;height:16px;background:#6a6a6a;"></div>
<div class="a t" style="letter-spacing:0.032px;left:594.40px;top:784.84px;font-size:12px;color:#3794ff;">Edit Conditions</div>
<svg class="a" style="left:815px;top:797px;" width="10" height="10" viewBox="0 0 10 10"><rect x="8" y="0" width="1.5" height="1.5" fill="#cfcfcf"/><rect x="6" y="2" width="1.5" height="1.5" fill="#cfcfcf"/><rect x="8" y="2" width="1.5" height="1.5" fill="#cfcfcf"/><rect x="4" y="4" width="1.5" height="1.5" fill="#cfcfcf"/><rect x="6" y="4" width="1.5" height="1.5" fill="#cfcfcf"/><rect x="8" y="4" width="1.5" height="1.5" fill="#cfcfcf"/><rect x="2" y="6" width="1.5" height="1.5" fill="#cfcfcf"/><rect x="4" y="6" width="1.5" height="1.5" fill="#cfcfcf"/><rect x="6" y="6" width="1.5" height="1.5" fill="#cfcfcf"/><rect x="8" y="6" width="1.5" height="1.5" fill="#cfcfcf"/><rect x="0" y="8" width="1.5" height="1.5" fill="#cfcfcf"/><rect x="2" y="8" width="1.5" height="1.5" fill="#cfcfcf"/><rect x="4" y="8" width="1.5" height="1.5" fill="#cfcfcf"/><rect x="6" y="8" width="1.5" height="1.5" fill="#cfcfcf"/><rect x="8" y="8" width="1.5" height="1.5" fill="#cfcfcf"/></svg>
<div class="a" style="left:7px;top:968px;width:1882px;height:18px;background:#3e3e42;"></div>
<div class="a" style="left:7px;top:968px;width:59px;height:18px;background:#333337;box-shadow:inset 0 0 0 1px #434346;"></div>
<div class="a t" style="letter-spacing:-0.766px;left:9.40px;top:968.84px;font-size:12px;color:#f1f1f1;">100 %</div>
<svg class="a" style="left:58px;top:975px;" width="7" height="4" viewBox="0 0 7 4"><path d="M0 0H7L3.5 4Z" fill="#999999"/></svg>
<svg class="a" style="left:90px;top:970px;" width="14" height="14" viewBox="0 0 14 14"><circle cx="7" cy="7" r="6.5" fill="#ffffff"/><circle cx="7" cy="7" r="5.5" fill="#1ba14a"/><path d="M4 7.2L6.2 9.3L10 5" fill="none" stroke="#fff" stroke-width="1.6"/></svg>
<div class="a t" style="letter-spacing:-0.057px;left:106.40px;top:968.84px;font-size:12px;color:#f1f1f1;">No issues found</div>
<div class="a" style="left:249px;top:970px;width:1px;height:14px;background:#9a9a9a;"></div>
<svg class="a" style="left:265px;top:970px;" width="13" height="13" viewBox="0 0 13 13"><path d="M2 7L7 2L11 6L6 11Z" fill="none" stroke="#c5c5c5" stroke-width="1.3"/><path d="M8 1L10 0M10 3L12 2" stroke="#c5c5c5" stroke-width="1"/></svg>
<svg class="a" style="left:281px;top:975px;" width="7" height="4" viewBox="0 0 7 4"><path d="M0 0H7L3.5 4Z" fill="#f1f1f1"/></svg>
<svg class="a" style="left:318px;top:972px;" width="5" height="9" viewBox="0 0 5 9"><path d="M5 0V9L0 4.5Z" fill="#5a5a5a"/></svg>
<svg class="a" style="left:1682px;top:972px;" width="5" height="9" viewBox="0 0 5 9"><path d="M0 0V9L5 4.5Z" fill="#5a5a5a"/></svg>
<div class="a t" style="letter-spacing:-0.363px;left:1714.40px;top:969.84px;font-size:12px;color:#f1f1f1;">Ln: 90</div>
<div class="a t" style="letter-spacing:-0.360px;left:1762.40px;top:969.84px;font-size:12px;color:#f1f1f1;">Ch: 17</div>
<div class="a t" style="letter-spacing:-1.496px;left:1813.40px;top:970.84px;font-size:12px;color:#f1f1f1;">SPC</div>
<div class="a t" style="letter-spacing:-1.286px;left:1852.40px;top:970.84px;font-size:12px;color:#f1f1f1;">CRLF</div>
<div class="a t" style="letter-spacing:-0.183px;left:5.40px;top:991.84px;font-size:12px;color:#d0d0d0;">Call Stack</div>
<div class="a" style="left:6px;top:1011px;width:52px;height:6px;background:#3f3f46;"></div>
<div class="a t" style="letter-spacing:-0.016px;left:68.40px;top:991.84px;font-size:12px;color:#d0d0d0;">Breakpoints</div>
<div class="a" style="left:69px;top:1011px;width:63px;height:6px;background:#3f3f46;"></div>
<div class="a t" style="letter-spacing:-0.067px;left:142.40px;top:991.84px;font-size:12px;color:#d0d0d0;">Exception Settings</div>
<div class="a" style="left:143px;top:1011px;width:98px;height:6px;background:#3f3f46;"></div>
<div class="a t" style="letter-spacing:0.273px;left:251.40px;top:991.84px;font-size:12px;color:#d0d0d0;">Command Window</div>
<div class="a" style="left:252px;top:1011px;width:105px;height:6px;background:#3f3f46;"></div>
<div class="a t" style="letter-spacing:0.197px;left:367.40px;top:991.84px;font-size:12px;color:#d0d0d0;">Immediate Window</div>
<div class="a" style="left:368px;top:1011px;width:105px;height:6px;background:#3f3f46;"></div>
<div class="a t" style="letter-spacing:0.528px;left:483.40px;top:991.84px;font-size:12px;color:#d0d0d0;">Output</div>
<div class="a" style="left:484px;top:1011px;width:39px;height:6px;background:#3f3f46;"></div>
<div class="a t" style="letter-spacing:0.017px;left:533.40px;top:991.84px;font-size:12px;color:#d0d0d0;">Containers</div>
<div class="a" style="left:534px;top:1011px;width:58px;height:6px;background:#3f3f46;"></div>
<div class="a t" style="letter-spacing:0.303px;left:602.40px;top:991.84px;font-size:12px;color:#d0d0d0;">Autos</div>
<div class="a" style="left:603px;top:1011px;width:32px;height:6px;background:#3f3f46;"></div>
<div class="a t" style="letter-spacing:-0.081px;left:645.40px;top:991.84px;font-size:12px;color:#d0d0d0;">Locals</div>
<div class="a" style="left:646px;top:1011px;width:34px;height:6px;background:#3f3f46;"></div>
<div class="a t" style="letter-spacing:0.089px;left:690.40px;top:991.84px;font-size:12px;color:#d0d0d0;">Watch 1</div>
<div class="a" style="left:691px;top:1011px;width:44px;height:6px;background:#3f3f46;"></div>
<div class="a" style="left:0px;top:1017px;width:1920px;height:23px;background:#ca5100;"></div>
<svg class="a" style="left:4px;top:1023px;" width="17" height="13" viewBox="0 0 17 13"><path d="M3.8 1H15.5L12.5 11.5H0.8Z" fill="none" stroke="#ffffff" stroke-width="1.2"/></svg>
<div class="a t" style="letter-spacing:-0.297px;left:27.40px;top:1020.84px;font-size:12px;color:#ffffff;">Ready</div>
<svg class="a" style="left:1709px;top:1022px;" width="10" height="13" viewBox="0 0 10 13"><path d="M5 13V3" stroke="#e8e8e8" stroke-width="2"/><path d="M0.8 6L5 1L9.2 6" fill="none" stroke="#e8e8e8" stroke-width="1.8"/></svg>
<div class="a t" style="letter-spacing:0.053px;left:1728.40px;top:1020.84px;font-size:12px;color:#ffffff;">Add to Source Control</div>
<svg class="a" style="left:1853px;top:1025px;" width="8" height="5" viewBox="0 0 8 5"><path d="M0 5H8L4 0Z" fill="#ffffff"/></svg>
<svg class="a" style="left:1880px;top:1020px;" width="22" height="18" viewBox="0 0 22 18"><path d="M4 9V5.5A4.3 4.3 0 0 1 12.6 5.5V9L14 10.5H2.5Z" fill="#e0e0e0"/><circle cx="8.3" cy="12.3" r="1.5" fill="#e0e0e0"/><circle cx="15.5" cy="12" r="6" fill="#ca5100"/><circle cx="15.5" cy="12" r="5.2" fill="#ffffff"/><text x="12.6" y="15.8" font-size="9.5" fill="#000" font-family="Liberation Sans">3</text></svg>
<div class="a" style="left:0px;top:1040px;width:1920px;height:8px;background:linear-gradient(to right,#1f3b44,#1e3340 50%,#1b2846);"></div>
<div class="a" style="left:742px;top:1040px;width:114px;height:8px;background:#4b6069;"></div>
<div class="a" style="left:1915px;top:1040px;width:1px;height:8px;background:#7a8aa0;"></div>
<div class="a t" style="letter-spacing:-0.215px;left:1813.40px;top:1042.84px;font-size:12px;color:#ffffff;">6:16 PM</div></body></html>
